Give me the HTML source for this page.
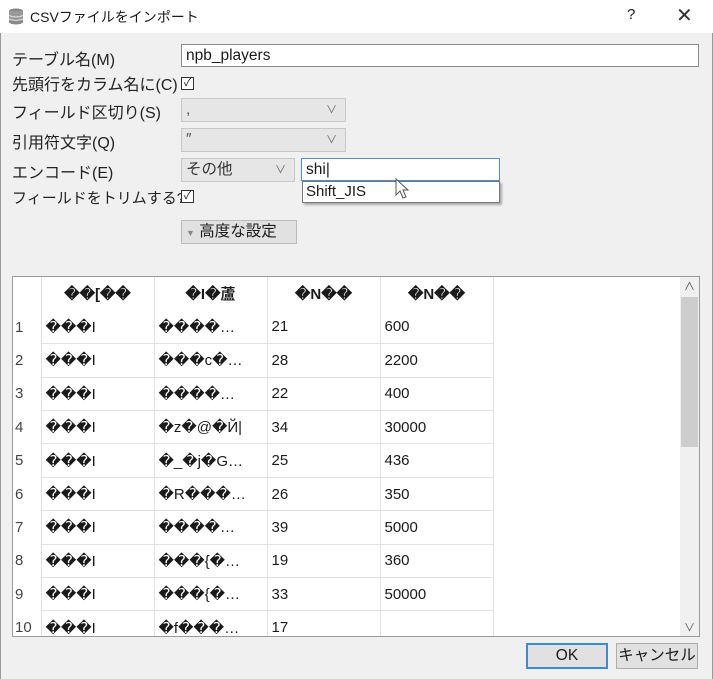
<!DOCTYPE html>
<html><head><meta charset="utf-8"><style>
*{margin:0;padding:0;box-sizing:border-box}
body{width:713px;height:679px;background:#f0f0f0;font-family:"Liberation Sans","Noto Sans CJK JP",sans-serif;color:#1a1a1a;position:relative;overflow:hidden;font-size:15px}
.a{position:absolute;white-space:nowrap}
.lbl{font-size:16px;color:#222}
.inp{position:absolute;background:#fff;border:1px solid #8a8a8a;height:23px;padding:0 4px;line-height:21px;font-size:15.5px}
.sel{position:absolute;background:#e6e6e6;border:1px solid #c8c8c8;height:24px;padding:0 4px;line-height:22px;font-size:15.5px;color:#555}
.sel .ch{position:absolute;right:8px;top:0;font-size:11px;color:#666}
.cb{position:absolute;width:13px;height:13px;border:1px solid #333;background:#fff;font-size:11px;line-height:11px;text-align:center}
.tw{position:absolute;left:13px;top:277px;width:667px;height:359px;overflow:hidden;background:#fff}
table{border-collapse:collapse;background:#fff}
td{height:33.4px;border-right:1px solid #e2e2e2;border-bottom:1px solid #e2e2e2;font-size:15px;padding-left:4px;white-space:nowrap;overflow:hidden}
td.r{border-bottom:none;padding-left:2px;color:#444}
tr.h td{font-weight:bold;text-align:center;padding:0;border-bottom:none}
</style></head><body>
<div class="a" style="left:0;top:0;width:713px;height:33px;background:#fff"></div>
<svg class="a" style="left:8px;top:8px" width="16" height="17" viewBox="0 0 16 17"><ellipse cx="8" cy="3" rx="7" ry="2.5" fill="#888"/><rect x="1" y="3" width="14" height="11" fill="#999"/><ellipse cx="8" cy="14" rx="7" ry="2.5" fill="#888"/><path d="M1 7.5q7 3 14 0M1 11q7 3 14 0" stroke="#ddd" fill="none"/></svg>
<div class="a" style="left:30px;top:7px;font-size:14px">CSVファイルをインポート</div>
<div class="a" style="left:627px;top:6px;font-size:15px">?</div>
<div class="a" style="left:676px;top:3px;font-size:20px;color:#333">✕</div>
<div class="a" style="left:0;top:33px;width:1px;height:646px;background:#999"></div>
<div class="a" style="left:712px;top:33px;width:1px;height:646px;background:#999"></div>

<div class="a lbl" style="left:12px;top:46px">テーブル名(M)</div>
<div class="inp" style="left:181px;top:44px;width:518px">npb_players</div>
<div class="a lbl" style="left:12px;top:71px">先頭行をカラム名に(C)</div>
<div class="cb" style="left:181px;top:77px">✓</div>
<div class="a lbl" style="left:12px;top:99px">フィールド区切り(S)</div>
<div class="sel" style="left:181px;top:98px;width:165px">,<span class="ch">∨</span></div>
<div class="a lbl" style="left:12px;top:129px">引用符文字(Q)</div>
<div class="sel" style="left:181px;top:128px;width:165px">″<span class="ch">∨</span></div>
<div class="a lbl" style="left:12px;top:159px">エンコード(E)</div>
<div class="sel" style="left:181px;top:158px;width:114px;color:#333">その他<span class="ch">∨</span></div>
<div class="inp" style="left:301px;top:158px;width:199px;border-color:#4a8ed0">shi|</div>
<div class="a" style="left:302px;top:181px;width:198px;height:22px;background:#fff;border:1px solid #777;box-shadow:2px 2px 2px #aaa;font-size:15px;padding-left:3px;line-height:20px">Shift_JIS</div>
<svg class="a" style="left:395px;top:178px" width="14" height="22" viewBox="0 0 14 22"><path d="M1 1v16l4-4 3 7 3-1-3-7h5z" fill="#fff" stroke="#555"/></svg>
<div class="a lbl" style="left:12px;top:187px;font-size:15px">フィールドをトリムする?</div>
<div class="cb" style="left:181px;top:190px">✓</div>
<div class="a" style="left:181px;top:220px;width:116px;height:24px;background:#e1e1e1;border:1px solid #bbb;font-size:15.5px;line-height:22px;padding-left:4px"><span style="font-size:9px;color:#888">▼</span> 高度な設定</div>

<div class="a" style="left:12px;top:276px;width:688px;height:361px;background:#fff;border:1px solid #9a9a9a"></div>
<div class="tw"><table>
<tr class="h"><td class="r" style="width:28px"></td><td style="width:113px">��[��</td><td style="width:113px">�I�蘆</td><td style="width:113px">�N��</td><td style="width:113px">�N��</td></tr>
<tr><td class="r">1</td><td>���I</td><td>����…</td><td>21</td><td>600</td></tr>
<tr><td class="r">2</td><td>���I</td><td>���c�…</td><td>28</td><td>2200</td></tr>
<tr><td class="r">3</td><td>���I</td><td>����…</td><td>22</td><td>400</td></tr>
<tr><td class="r">4</td><td>���I</td><td>�z�@�Й|</td><td>34</td><td>30000</td></tr>
<tr><td class="r">5</td><td>���I</td><td>�_�j�G…</td><td>25</td><td>436</td></tr>
<tr><td class="r">6</td><td>���I</td><td>�R���…</td><td>26</td><td>350</td></tr>
<tr><td class="r">7</td><td>���I</td><td>����…</td><td>39</td><td>5000</td></tr>
<tr><td class="r">8</td><td>���I</td><td>���{�…</td><td>19</td><td>360</td></tr>
<tr><td class="r">9</td><td>���I</td><td>���{�…</td><td>33</td><td>50000</td></tr>
<tr><td class="r">10</td><td>���I</td><td>�f���…</td><td>17</td><td></td></tr>
</table></div>
<div class="a" style="left:680px;top:277px;width:19px;height:359px;background:#f0f0f0"></div>
<div class="a" style="left:684px;top:278px;font-size:11px;color:#555">∧</div>
<div class="a" style="left:681px;top:297px;width:17px;height:150px;background:#cdcdcd"></div>
<div class="a" style="left:684px;top:619px;font-size:11px;color:#555">∨</div>

<div class="a" style="left:526px;top:643px;width:82px;height:26px;background:#e1e1e1;border:2px solid #3a8ad8;text-align:center;line-height:22px;font-size:15.5px">OK</div>
<div class="a" style="left:616px;top:643px;width:82px;height:26px;background:#e1e1e1;border:1px solid #adadad;text-align:center;line-height:24px;font-size:15.5px">キャンセル</div>
</body></html>
